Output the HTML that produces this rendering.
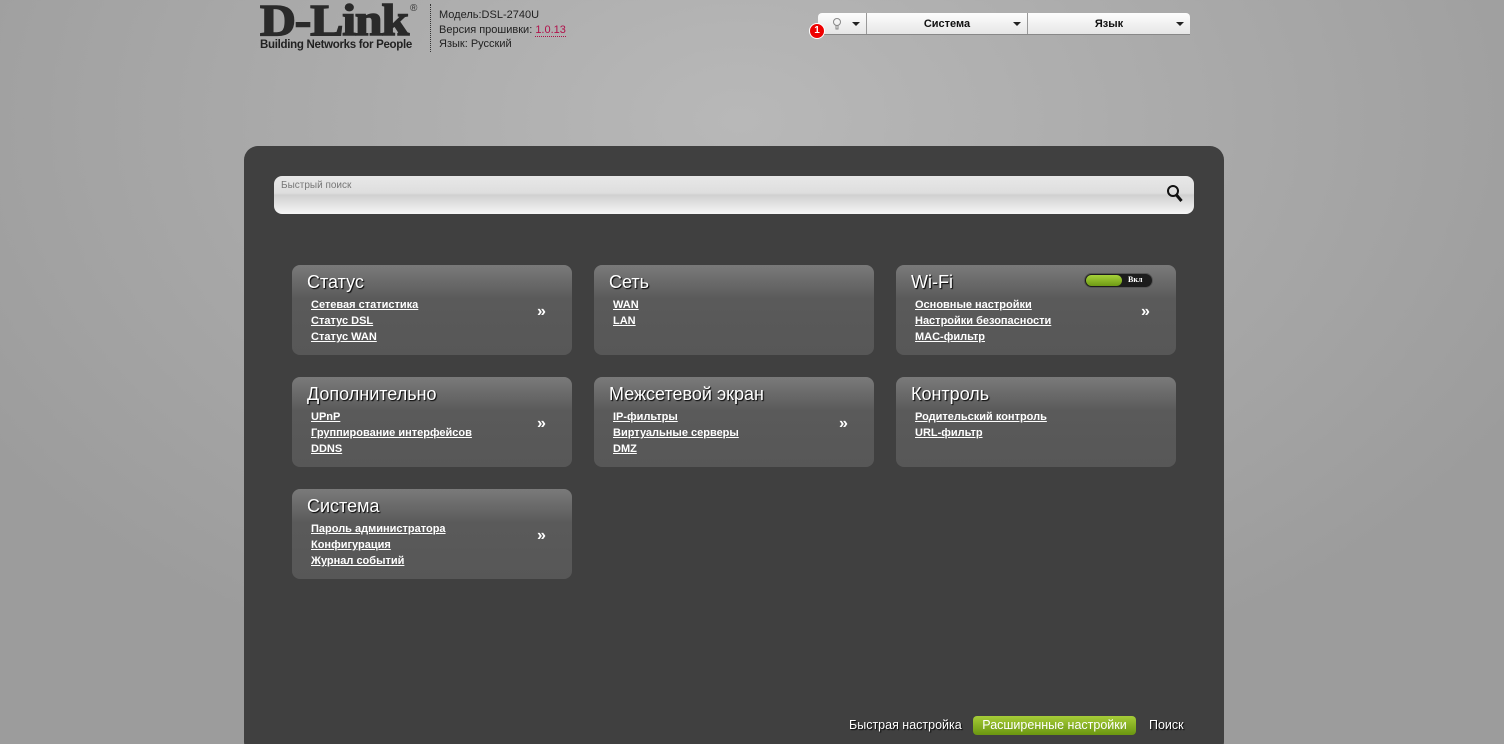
<!DOCTYPE html>
<html><head><meta charset="utf-8">
<style>
*{margin:0;padding:0;box-sizing:border-box}
html,body{width:1504px;height:744px;overflow:hidden}
body{position:relative;font-family:"Liberation Sans",Arial,sans-serif;
background:radial-gradient(ellipse 900px 600px at 740px 120px,#b8b8b8 0%,#aaaaaa 50%,#9c9c9c 100%)}
.logo{position:absolute;left:260px;top:2px;}
.logo .dl{font-family:"Liberation Serif",serif;font-weight:bold;font-size:44px;color:#2a2a2a;line-height:38px;transform:scaleX(1.13);transform-origin:left;-webkit-text-stroke:1.5px #2a2a2a;letter-spacing:-1px}
.logo .reg{position:absolute;left:150px;top:1px;font-size:10px;color:#333}
.logo .tag{font-size:11.5px;font-weight:bold;color:#222;letter-spacing:-0.3px;margin-top:-1px}
.sep{position:absolute;left:430px;top:4px;height:48px;border-left:1px dotted #333}
.info{position:absolute;left:439px;top:8px;font-size:11px;color:#222;line-height:14.5px}
.info a{color:#b0104a;border-bottom:1px dotted #b0104a;text-decoration:none}
.tb{position:absolute;left:818px;top:13px;width:372px;height:22px;background:linear-gradient(#fdfdfd,#e6e6e6);border-radius:4px 4px 0 0;border-bottom:1px solid #888;display:flex;font-size:11px;font-weight:bold;color:#111}
.tb div{position:relative;border-right:1px solid #999;display:flex;align-items:center;justify-content:center;height:100%}
.tb div:last-child{border-right:none}
.arr{position:absolute;right:6px;top:9px;width:0;height:0;border-left:4px solid transparent;border-right:4px solid transparent;border-top:4px solid #222}
.badge{position:absolute;left:809px;top:23px;width:16px;height:16px;border-radius:50%;background:#e00;border:1px solid #fff;color:#fff;font-size:10px;font-weight:bold;text-align:center;line-height:14px}
.panel{position:absolute;left:244px;top:146px;width:980px;height:610px;background:#404040;border-radius:14px}
.search{position:absolute;left:274px;top:176px;width:920px;height:38px;border-radius:8px;background:linear-gradient(#e8e8e8 0%,#dedede 45%,#d0d0d0 50%,#f6f6f6 100%)}
.search span{position:absolute;left:7px;top:4px;font-size:10px;color:#777}
.card{position:absolute;width:280px;height:90px;border-radius:8px;background:linear-gradient(#7a7a7a 0px,#5a5a5a 34px,#575757 100%)}
.card h2{position:absolute;left:15px;top:7px;font-size:18px;font-weight:normal;color:#fff;text-shadow:1px 1px 1px #000}
.card ul{position:absolute;left:19px;top:32px;list-style:none}
.card li{font-size:11px;font-weight:bold;line-height:16px;color:#fff;text-decoration:underline}
.card .go{position:absolute;left:245px;top:38px;color:#fff;font-size:16px;font-weight:bold}
.tog{position:absolute;left:188px;top:8px;width:69px;height:15px;border-radius:8px;background:#1c1c1c;border:1px solid #555}
.tog i{position:absolute;left:1px;top:1px;width:36px;height:11px;border-radius:6px;background:linear-gradient(#a6d23a,#6e9a14)}
.tog b{position:absolute;left:43px;top:1px;font-family:"Liberation Serif",serif;font-size:8px;color:#fff}
.bot{position:absolute;top:718px;font-size:12.5px;color:#fff;text-shadow:1px 1px 1px #000}
.btn{position:absolute;left:973px;top:716px;width:163px;height:19px;border-radius:4px;background:linear-gradient(#a6cc38,#6a9610);color:#fff;font-size:12.5px;text-align:center;line-height:19px}
</style></head><body>
<div class="logo"><div class="dl">D-Link</div><span class="reg">®</span><div class="tag">Building Networks for People</div></div>
<div class="sep"></div>
<div class="info">Модель:DSL-2740U<br>Версия прошивки: <a>1.0.13</a><br>Язык: Русский</div>
<div class="tb">
<div style="width:49px"><svg width="10" height="14" viewBox="0 0 10 14" style="margin-right:10px"><circle cx="5" cy="5" r="3.5" fill="none" stroke="#888"/><path d="M4 8v4h2V8" fill="none" stroke="#888"/></svg><span class="arr"></span></div>
<div style="width:161px">Система<span class="arr"></span></div>
<div style="width:162px">Язык<span class="arr"></span></div>
</div>
<div class="badge">1</div>
<div class="panel"></div>
<div class="search"><span>Быстрый поиск</span>
<svg style="position:absolute;left:892px;top:8px" width="18" height="20" viewBox="0 0 18 20"><circle cx="7" cy="7" r="5" fill="none" stroke="#111" stroke-width="2"/><path d="M10.5 11l5 6" stroke="#111" stroke-width="3"/></svg></div>

<div class="card" style="left:292px;top:265px"><h2>Статус</h2><ul><li>Сетевая статистика</li><li>Статус DSL</li><li>Статус WAN</li></ul><span class="go">»</span></div>
<div class="card" style="left:594px;top:265px"><h2>Сеть</h2><ul><li>WAN</li><li>LAN</li></ul></div>
<div class="card" style="left:896px;top:265px"><h2>Wi-Fi</h2><div class="tog"><i></i><b>Вкл</b></div><ul><li>Основные настройки</li><li>Настройки безопасности</li><li>MAC-фильтр</li></ul><span class="go">»</span></div>
<div class="card" style="left:292px;top:377px"><h2>Дополнительно</h2><ul><li>UPnP</li><li>Группирование интерфейсов</li><li>DDNS</li></ul><span class="go">»</span></div>
<div class="card" style="left:594px;top:377px"><h2>Межсетевой экран</h2><ul><li>IP-фильтры</li><li>Виртуальные серверы</li><li>DMZ</li></ul><span class="go">»</span></div>
<div class="card" style="left:896px;top:377px"><h2>Контроль</h2><ul><li>Родительский контроль</li><li>URL-фильтр</li></ul></div>
<div class="card" style="left:292px;top:489px"><h2>Система</h2><ul><li>Пароль администратора</li><li>Конфигурация</li><li>Журнал событий</li></ul><span class="go">»</span></div>

<div class="bot" style="left:849px">Быстрая настройка</div>
<div class="btn">Расширенные настройки</div>
<div class="bot" style="left:1149px">Поиск</div>
</body></html>
